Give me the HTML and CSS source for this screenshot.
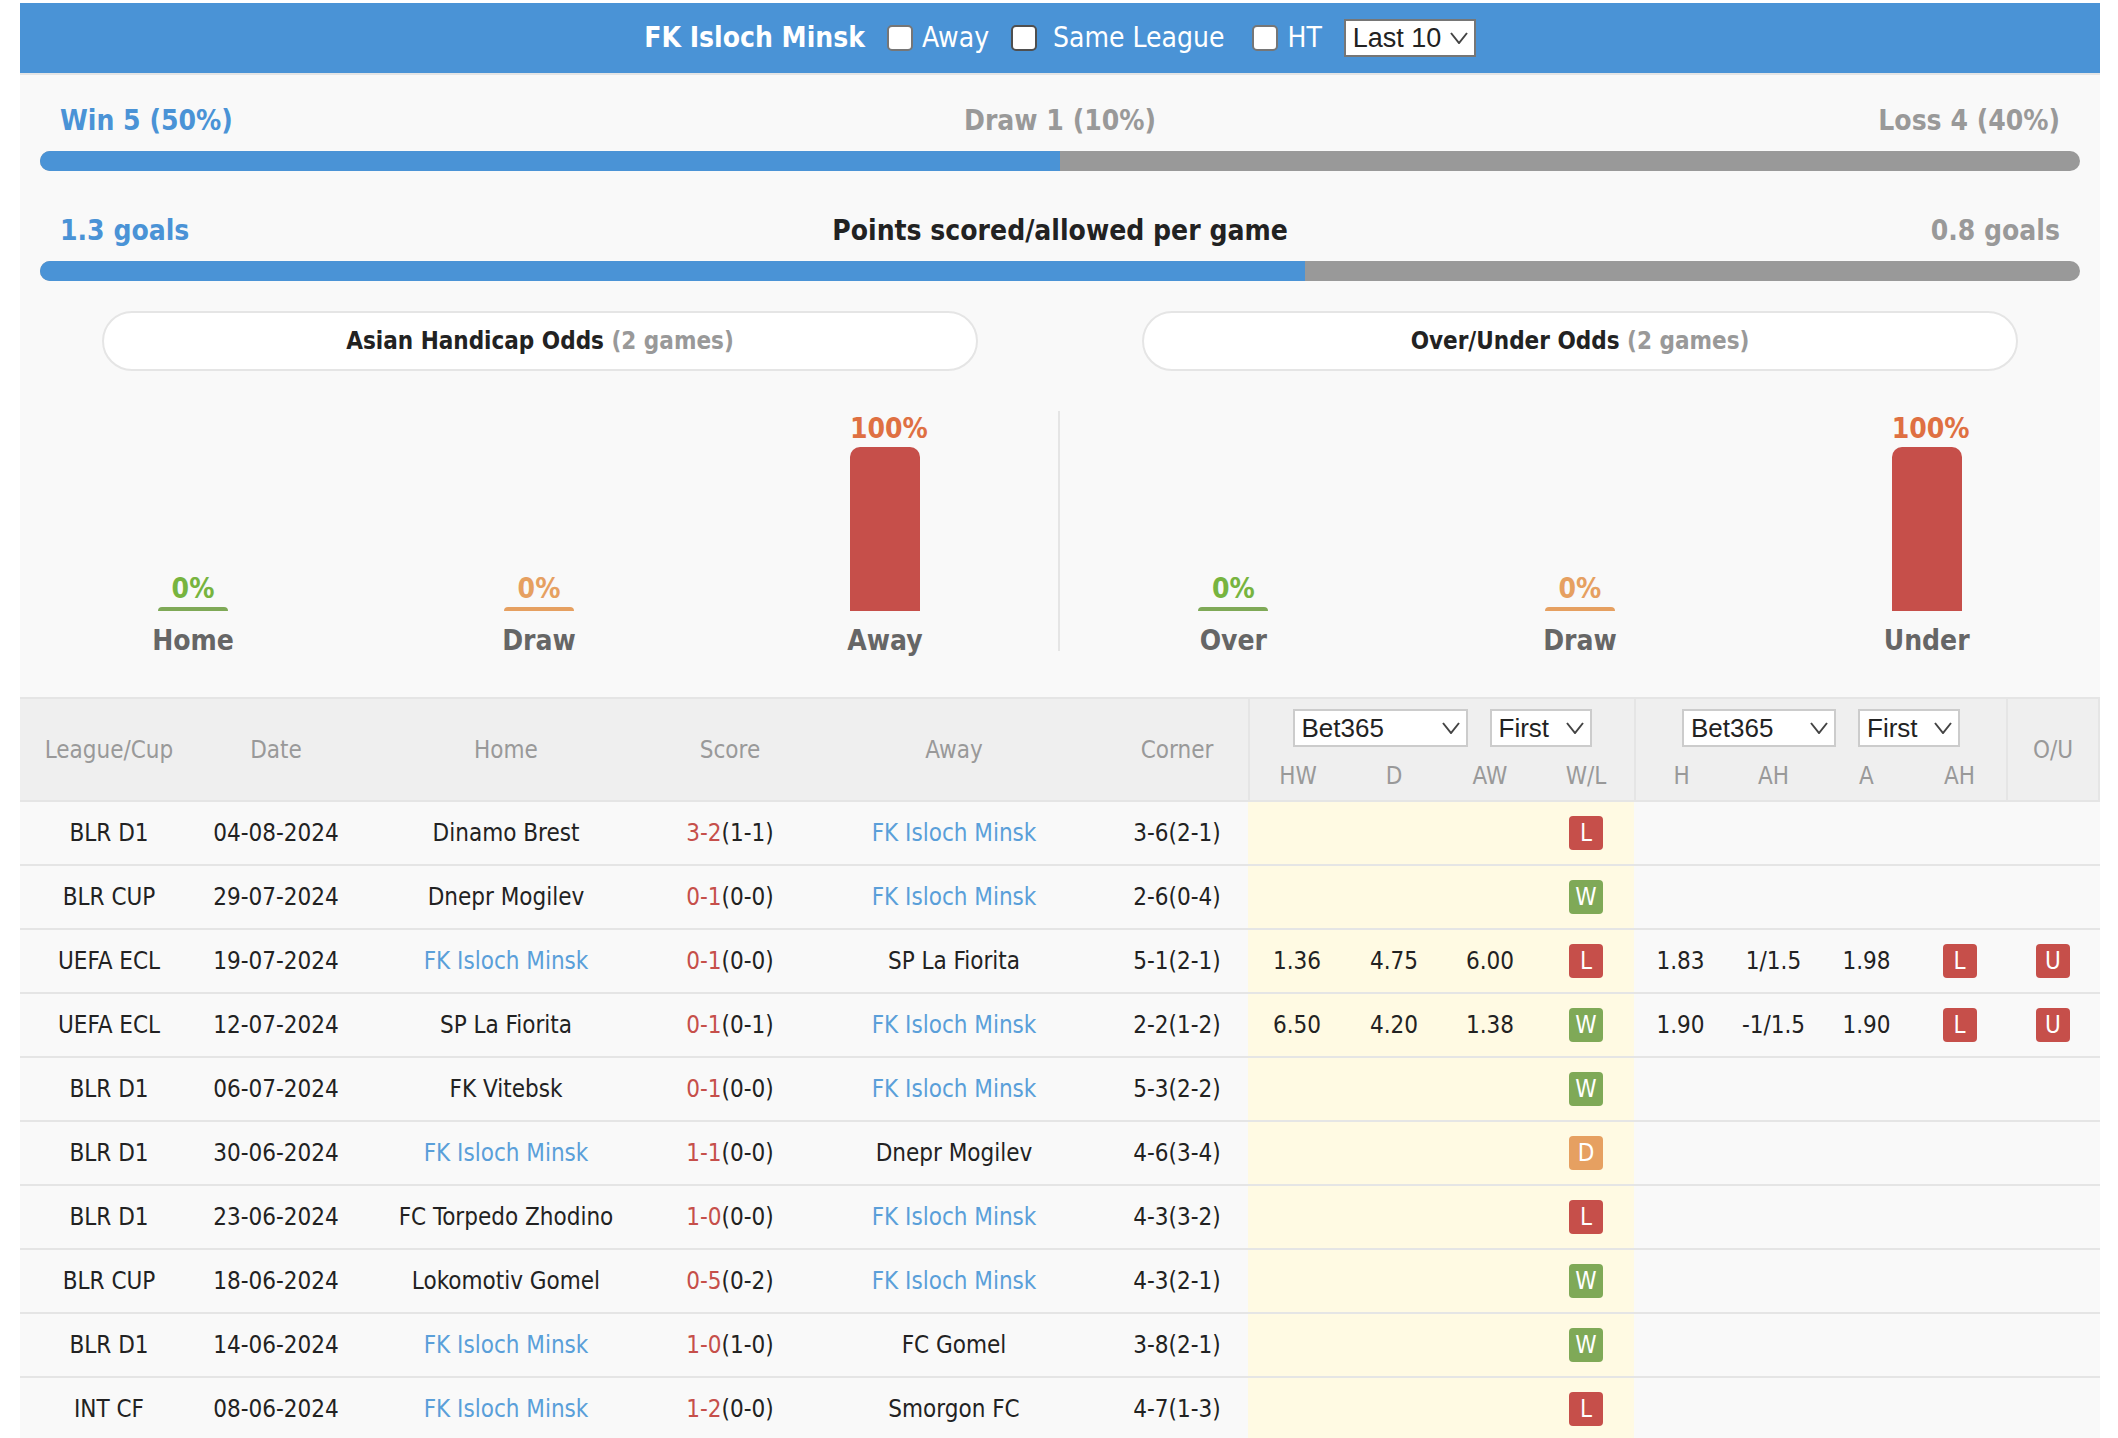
FILE: index.html
```html
<!DOCTYPE html>
<html lang="en">
<head>
<meta charset="utf-8">
<title>FK Isloch Minsk - Previous Scores</title>
<meta name="viewport" content="width=device-width, initial-scale=1">
<link rel="stylesheet" href="styles.css">
</head>
<body>
<main class="panel">
  <header class="bar">
    <h1 class="team">FK Isloch Minsk</h1>
    <label class="check"><input type="checkbox">Away</label>
    <label class="check check-wide"><input type="checkbox" class="dark">Same League</label>
    <label class="check"><input type="checkbox">HT</label>
    <span class="select select-dark"><select aria-label="Number of games"><option>Last 10</option></select><svg class="chevron" viewBox="0 0 18 12"><path d="M1 1l8 10 8-10"/></svg></span>
  </header>

  <section class="stat">
    <div class="stat-text"><span class="blue">Win 5 (50%)</span><span>Draw 1 (10%)</span><span class="end">Loss 4 (40%)</span></div>
    <div class="track"><div class="fill" style="width:50%"></div></div>
  </section>
  <section class="stat">
    <div class="stat-text"><span class="blue">1.3 goals</span><span class="black">Points scored/allowed per game</span><span class="end">0.8 goals</span></div>
    <div class="track"><div class="fill" style="width:62%"></div></div>
  </section>

  <div class="odds">
    <section class="odds-half">
      <h2 class="pill">Asian Handicap Odds <span>(2 games)</span></h2>
      <div class="chart">
        <div class="col"><div class="plot green"><b>0%</b><i style="height:4px"></i></div><span>Home</span></div>
        <div class="col"><div class="plot orange"><b>0%</b><i style="height:4px"></i></div><span>Draw</span></div>
        <div class="col"><div class="plot red"><b>100%</b><i style="height:164px"></i></div><span>Away</span></div>
      </div>
    </section>
    <section class="odds-half">
      <h2 class="pill">Over/Under Odds <span>(2 games)</span></h2>
      <div class="chart">
        <div class="col"><div class="plot green"><b>0%</b><i style="height:4px"></i></div><span>Over</span></div>
        <div class="col"><div class="plot orange"><b>0%</b><i style="height:4px"></i></div><span>Draw</span></div>
        <div class="col"><div class="plot red"><b>100%</b><i style="height:164px"></i></div><span>Under</span></div>
      </div>
    </section>
  </div>

  <table class="games">
    <colgroup>
      <col class="w-league"><col class="w-date"><col class="w-team"><col class="w-score"><col class="w-team"><col class="w-corner">
      <col class="w-first"><col class="w-odd"><col class="w-odd"><col class="w-odd">
      <col class="w-line"><col class="w-line"><col class="w-line"><col class="w-line"><col class="w-ou">
    </colgroup>
    <thead>
      <tr class="head-top">
        <th rowspan="2">League/Cup</th><th rowspan="2">Date</th><th rowspan="2">Home</th><th rowspan="2">Score</th><th rowspan="2">Away</th><th rowspan="2">Corner</th>
        <th colspan="4" class="edge"><div class="selects">
          <span class="select wide"><select aria-label="1x2 bookmaker"><option>Bet365</option></select><svg class="chevron" viewBox="0 0 18 12"><path d="M1 1l8 10 8-10"/></svg></span>
          <span class="select narrow"><select aria-label="1x2 odds time"><option>First</option></select><svg class="chevron" viewBox="0 0 18 12"><path d="M1 1l8 10 8-10"/></svg></span>
        </div></th>
        <th colspan="4" class="edge"><div class="selects">
          <span class="select medium"><select aria-label="Handicap bookmaker"><option>Bet365</option></select><svg class="chevron" viewBox="0 0 18 12"><path d="M1 1l8 10 8-10"/></svg></span>
          <span class="select narrow"><select aria-label="Handicap odds time"><option>First</option></select><svg class="chevron" viewBox="0 0 18 12"><path d="M1 1l8 10 8-10"/></svg></span>
        </div></th>
        <th rowspan="2" class="edge edge-right">O/U</th>
      </tr>
      <tr class="head-sub"><th class="edge">HW</th><th>D</th><th>AW</th><th>W/L</th><th class="edge">H</th><th>AH</th><th>A</th><th>AH</th></tr>
    </thead>
    <tbody>
      <tr><td>BLR D1</td><td>04-08-2024</td><td><a href="#">Dinamo Brest</a></td><td><em>3-2</em>(1-1)</td><td><a href="#" class="own">FK Isloch Minsk</a></td><td>3-6(2-1)</td><td class="y"></td><td class="y"></td><td class="y"></td><td class="y"><span class="badge l">L</span></td><td></td><td></td><td></td><td></td><td></td></tr>
      <tr><td>BLR CUP</td><td>29-07-2024</td><td><a href="#">Dnepr Mogilev</a></td><td><em>0-1</em>(0-0)</td><td><a href="#" class="own">FK Isloch Minsk</a></td><td>2-6(0-4)</td><td class="y"></td><td class="y"></td><td class="y"></td><td class="y"><span class="badge w">W</span></td><td></td><td></td><td></td><td></td><td></td></tr>
      <tr><td>UEFA ECL</td><td>19-07-2024</td><td><a href="#" class="own">FK Isloch Minsk</a></td><td><em>0-1</em>(0-0)</td><td><a href="#">SP La Fiorita</a></td><td>5-1(2-1)</td><td class="y">1.36</td><td class="y">4.75</td><td class="y">6.00</td><td class="y"><span class="badge l">L</span></td><td>1.83</td><td>1/1.5</td><td>1.98</td><td><span class="badge l">L</span></td><td><span class="badge l">U</span></td></tr>
      <tr><td>UEFA ECL</td><td>12-07-2024</td><td><a href="#">SP La Fiorita</a></td><td><em>0-1</em>(0-1)</td><td><a href="#" class="own">FK Isloch Minsk</a></td><td>2-2(1-2)</td><td class="y">6.50</td><td class="y">4.20</td><td class="y">1.38</td><td class="y"><span class="badge w">W</span></td><td>1.90</td><td>-1/1.5</td><td>1.90</td><td><span class="badge l">L</span></td><td><span class="badge l">U</span></td></tr>
      <tr><td>BLR D1</td><td>06-07-2024</td><td><a href="#">FK Vitebsk</a></td><td><em>0-1</em>(0-0)</td><td><a href="#" class="own">FK Isloch Minsk</a></td><td>5-3(2-2)</td><td class="y"></td><td class="y"></td><td class="y"></td><td class="y"><span class="badge w">W</span></td><td></td><td></td><td></td><td></td><td></td></tr>
      <tr><td>BLR D1</td><td>30-06-2024</td><td><a href="#" class="own">FK Isloch Minsk</a></td><td><em>1-1</em>(0-0)</td><td><a href="#">Dnepr Mogilev</a></td><td>4-6(3-4)</td><td class="y"></td><td class="y"></td><td class="y"></td><td class="y"><span class="badge d">D</span></td><td></td><td></td><td></td><td></td><td></td></tr>
      <tr><td>BLR D1</td><td>23-06-2024</td><td><a href="#">FC Torpedo Zhodino</a></td><td><em>1-0</em>(0-0)</td><td><a href="#" class="own">FK Isloch Minsk</a></td><td>4-3(3-2)</td><td class="y"></td><td class="y"></td><td class="y"></td><td class="y"><span class="badge l">L</span></td><td></td><td></td><td></td><td></td><td></td></tr>
      <tr><td>BLR CUP</td><td>18-06-2024</td><td><a href="#">Lokomotiv Gomel</a></td><td><em>0-5</em>(0-2)</td><td><a href="#" class="own">FK Isloch Minsk</a></td><td>4-3(2-1)</td><td class="y"></td><td class="y"></td><td class="y"></td><td class="y"><span class="badge w">W</span></td><td></td><td></td><td></td><td></td><td></td></tr>
      <tr><td>BLR D1</td><td>14-06-2024</td><td><a href="#" class="own">FK Isloch Minsk</a></td><td><em>1-0</em>(1-0)</td><td><a href="#">FC Gomel</a></td><td>3-8(2-1)</td><td class="y"></td><td class="y"></td><td class="y"></td><td class="y"><span class="badge w">W</span></td><td></td><td></td><td></td><td></td><td></td></tr>
      <tr><td>INT CF</td><td>08-06-2024</td><td><a href="#" class="own">FK Isloch Minsk</a></td><td><em>1-2</em>(0-0)</td><td><a href="#">Smorgon FC</a></td><td>4-7(1-3)</td><td class="y"></td><td class="y"></td><td class="y"></td><td class="y"><span class="badge l">L</span></td><td></td><td></td><td></td><td></td><td></td></tr>
    </tbody>
  </table>
</main>
</body>
</html>
```
FILE: styles.css
```css
* { box-sizing: border-box; }

body {
  margin: 0;
  padding: 3px 18px 0 20px;
  background: #fff;
  color: #222;
  font: 24px/32px Tahoma, "DejaVu Sans Condensed", "Noto Sans", sans-serif;
}

.panel { background: #f9f9f9; }

/* Title bar with filters */
.bar {
  display: flex;
  align-items: center;
  justify-content: center;
  height: 72px;
  background: #4a93d6;
  border-bottom: 2px solid #e5e5e5;
  color: #fff;
  font-size: 28px;
}
.team { margin: 0 22px 0 0; font-size: 28px; }
.check { display: flex; align-items: center; gap: 9px; margin-right: 22px; }
.check-wide { gap: 16px; margin-right: 28px; }
.check input {
  appearance: none;
  width: 26px;
  height: 26px;
  margin: 0;
  background: #fff;
  border: 2px solid #767676;
  border-radius: 5px;
}
.check input.dark { border-color: #4f4f4f; }

.select { position: relative; display: block; width: 132px; }
.select select {
  appearance: none;
  display: block;
  width: 100%;
  height: 38px;
  padding: 0 0 0 7px;
  background: #fff;
  border: 2px solid #ccc;
  border-radius: 0;
  color: #222;
  font: 26px/32px "Liberation Sans", Arial, sans-serif;
}
.select-dark select { border-color: #767676; font-size: 27px; }
.select.wide { width: 175px; }
.select.medium { width: 154px; }
.select.narrow { width: 102px; }
.chevron {
  position: absolute;
  top: 13px;
  right: 8px;
  width: 18px;
  height: 12px;
  fill: none;
  stroke: #444;
  stroke-width: 2;
  pointer-events: none;
}

/* Win / goals ratios */
.stat { padding: 30px 20px 0; height: 110px; }
.stat-text {
  display: grid;
  grid-template-columns: 1fr auto 1fr;
  padding: 0 20px;
  margin-bottom: 14px;
  color: #999;
  font-size: 28px;
  font-weight: bold;
}
.blue { color: #4a93d6; }
.black { color: #222; }
.end { text-align: right; }
.track { height: 20px; overflow: hidden; background: #999; border-radius: 10px; }
.fill { height: 100%; background: #4a93d6; }

/* Odds charts */
.odds { display: grid; grid-template-columns: 1fr 1fr; padding: 16px 0 46px; }
.pill {
  height: 60px;
  margin: 0 82px 40px;
  background: #fff;
  border: 2px solid #e5e5e5;
  border-radius: 30px;
  font-size: 24px;
  line-height: 56px;
  text-align: center;
}
.pill span { color: #999; }
.chart { display: grid; grid-template-columns: 1fr 1fr 1fr; height: 240px; }
.odds-half:first-child .chart { border-right: 2px solid #e5e5e5; }
.col {
  display: flex;
  flex-direction: column;
  align-items: center;
  color: #666;
  font-size: 28px;
  font-weight: bold;
}
.col > span { margin-top: 14px; }
.plot {
  display: flex;
  flex-direction: column;
  justify-content: flex-end;
  width: 70px;
  height: 200px;
  text-align: center;
}
.plot b { margin-bottom: 2px; }
.plot i { border-radius: 10px 10px 0 0; }
.green b { color: #77b43f; }
.green i { background: #7fa957; }
.orange b { color: #e6a061; }
.orange i { background: #e6a061; }
.red b { color: #df7042; }
.red i { background: #c64f4a; }

/* Games table */
.games {
  width: 100%;
  table-layout: fixed;
  border-collapse: separate;
  border-spacing: 0;
  border-top: 2px solid #e5e5e5;
  text-align: center;
}
.w-league { width: 178px; }
.w-date { width: 156px; }
.w-team { width: 304px; }
.w-score { width: 144px; }
.w-corner { width: 142px; }
.w-first { width: 98px; }
.w-odd { width: 96px; }
.w-line { width: 93px; }
.w-ou { width: 94px; }
.games th {
  padding: 0;
  background: #efefef;
  border-bottom: 2px solid #e5e5e5;
  color: #999;
  font-weight: normal;
}
.games .edge { border-left: 2px solid #e5e5e5; }
.games .edge-right { border-right: 2px solid #e5e5e5; }
.games .head-top th[colspan] { border-bottom: 0; height: 58px; }
.head-sub th { height: 45px; padding-bottom: 6px; }
.selects { display: flex; justify-content: center; gap: 22px; }
.games td {
  height: 64px;
  padding: 0;
  border-bottom: 2px solid #e5e5e5;
  white-space: nowrap;
}
.games .y { background: #fffae3; }
.games a { color: #222; text-decoration: none; }
.games .own { color: #5a9fd9; }
.games em { color: #c64f4a; font-style: normal; }
.badge {
  display: block;
  width: 34px;
  height: 34px;
  margin: 0 auto;
  border-radius: 4px;
  color: #fff;
  line-height: 34px;
}
.l { background: #c64f4a; }
.w { background: #7fa957; }
.d { background: #e6a061; }
```
